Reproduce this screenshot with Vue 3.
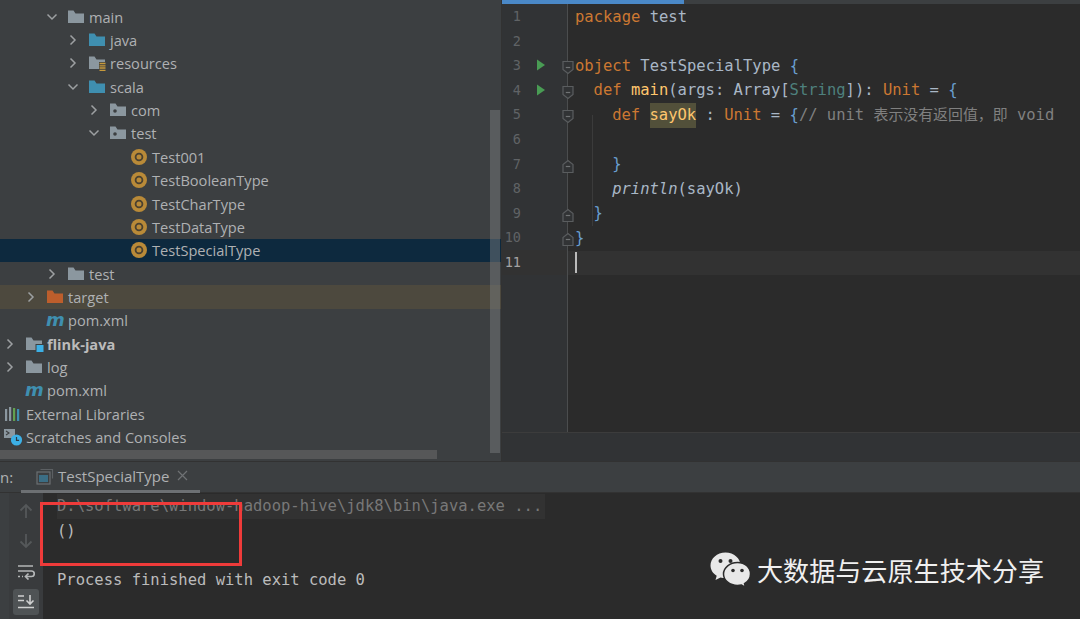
<script setup>
const tree = [
  { d: 3, open: true, icon: 'grey', t: 'main' },
  { d: 4, open: false, icon: 'blue', t: 'java' },
  { d: 4, open: false, icon: 'res', t: 'resources' },
  { d: 4, open: true, icon: 'blue', t: 'scala' },
  { d: 5, open: false, icon: 'pkg', t: 'com' },
  { d: 5, open: true, icon: 'pkg', t: 'test' },
  { d: 6, icon: 'obj', t: 'Test001' },
  { d: 6, icon: 'obj', t: 'TestBooleanType' },
  { d: 6, icon: 'obj', t: 'TestCharType' },
  { d: 6, icon: 'obj', t: 'TestDataType' },
  { d: 6, icon: 'obj', t: 'TestSpecialType', cls: 'sel' },
  { d: 3, open: false, icon: 'grey', t: 'test' },
  { d: 2, open: false, icon: 'orange', t: 'target', cls: 'excl' },
  { d: 2, icon: 'm', t: 'pom.xml' },
  { d: 1, open: false, icon: 'mod', t: 'flink-java', cls: 'bold' },
  { d: 1, open: false, icon: 'grey', t: 'log' },
  { d: 1, icon: 'm', t: 'pom.xml' },
  { d: 0, icon: 'lib', t: 'External Libraries' },
  { d: 0, icon: 'scr', t: 'Scratches and Consoles' }
]
const rowPad = (d) => ({ paddingLeft: (d === 0 ? 4 : (d - 1) * 21 + 4) + 'px' })
const folder = 'M1 3.5V15h16V5.5H8.5L6.5 2.5H1z'
const lines = [
  { n: 1 }, { n: 2 }, { n: 3, run: true, fold: 'open' }, { n: 4, run: true, fold: 'open' },
  { n: 5, fold: 'open' }, { n: 6 }, { n: 7, fold: 'close' }, { n: 8 }, { n: 9, fold: 'close' },
  { n: 10, fold: 'close' }, { n: 11, cur: true }
]
</script>

<template>
  <div class="app">
    <div class="top">
      <aside class="project">
        <div class="rows">
          <div v-for="(r, i) in tree" :key="i" class="row" :class="r.cls" :style="rowPad(r.d)">
            <span v-if="r.d > 0" class="chev">
              <svg v-if="r.open !== undefined" width="12" height="12" viewBox="0 0 12 12" fill="none" stroke="#9da0a2" stroke-width="1.5">
                <path v-if="r.open" d="M1.5 3.5 6 8l4.5-4.5" />
                <path v-else d="M3.5 1.5 8 6l-4.5 4.5" />
              </svg>
            </span>
            <svg class="ico" width="18" height="18" viewBox="0 0 18 18">
              <path v-if="r.icon === 'grey'" :d="folder" fill="#8b979f" />
              <path v-else-if="r.icon === 'blue'" :d="folder" fill="#3f8fb0" />
              <path v-else-if="r.icon === 'orange'" :d="folder" fill="#bd5e2c" />
              <template v-else-if="r.icon === 'res'">
                <path :d="folder" fill="#8b979f" />
                <rect x="11" y="8" width="7" height="9" fill="#3c3f41" />
                <path d="M11.500 9.500h6M11.500 11.800h6M11.500 14h6M11.500 16.300h6" stroke="#c79a3c" stroke-width="1.300" />
              </template>
              <template v-else-if="r.icon === 'pkg'">
                <path :d="folder" fill="#8b979f" />
                <circle cx="6" cy="10" r="1.800" fill="#3c3f41" />
              </template>
              <template v-else-if="r.icon === 'mod'">
                <path :d="folder" fill="#8b979f" />
                <rect x="10.500" y="9" width="8" height="8" fill="#3c3f41" />
                <rect x="11.500" y="10" width="7" height="7" fill="#3cb0e6" />
              </template>
              <template v-else-if="r.icon === 'obj'">
                <circle cx="9" cy="9" r="8" fill="#b98a38" />
                <circle cx="9" cy="9" r="3.400" fill="none" stroke="#4a4130" stroke-width="1.800" />
              </template>
              <template v-else-if="r.icon === 'lib'">
                <path d="M1 4h2.200v12H1z" fill="#8b979f" />
                <path d="M5 2h2.200v14H5z" fill="#8b979f" />
                <path d="M9 3h2.200v13H9z" fill="#62a04f" />
                <path d="M13 4h2.200v12H13z" fill="#3f8fb0" />
              </template>
              <template v-else-if="r.icon === 'scr'">
                <path d="M0 1h11v9H0z" fill="#8b979f" />
                <path d="M2 3l3 2-3 2" fill="none" stroke="#3c3f41" stroke-width="1.100" />
                <circle cx="12.500" cy="12" r="5.600" fill="#3cb0e6" />
                <path d="M12.500 9v3.400h2.600" fill="none" stroke="#2b3a44" stroke-width="1.200" />
              </template>
              <text v-else x="0" y="15" class="mglyph">m</text>
            </svg>
            <span class="label">{{ r.t }}</span>
          </div>
        </div>
        <div class="vbar"></div>
        <div class="hbar"></div>
      </aside>

      <main class="editor-wrap">
        <div class="tabline"><div class="tabactive"></div></div>
        <div class="editor">
          <div class="gutter">
            <div v-for="l in lines" :key="l.n" class="gl" :class="{ curg: l.cur }">
              <span class="num">{{ l.n }}</span>
              <svg v-if="l.run" class="run" width="8" height="12" viewBox="0 0 8 12"><path d="M0 0.500 8 6l-8 5.500z" fill="#499c54" /></svg>
              <svg v-if="l.fold" class="fold" width="12" height="15" viewBox="0 0 12 15" fill="#313335" stroke="#5a5d5f" stroke-width="1.200">
                <path v-if="l.fold === 'open'" d="M1 1.500h10v8L6 13.500 1 9.500z" />
                <path v-else d="M1 13.500h10v-8L6 1.500 1 5.500z" />
                <path d="M3.800 7.500h4.400" stroke="#707375" />
              </svg>
            </div>
          </div>
          <div class="code">
            <div class="cl"><span class="k">package</span> test</div>
            <div class="cl"></div>
            <div class="cl"><span class="k">object</span> <span class="ty">TestSpecialType</span> <span class="br">{</span></div>
            <div class="cl i1"><span class="k">def</span> <span class="fn">main</span>(args: <span class="ty">Array</span>[<span class="st">String</span>]): <span class="k">Unit</span> = <span class="br">{</span></div>
            <div class="cl i2"><span class="k">def</span> <span class="hl">sayOk</span> : <span class="k">Unit</span> = <span class="br">{</span><span class="cm">// unit <span class="cjk">表示没有返回值，即</span> void</span></div>
            <div class="cl"></div>
            <div class="cl i2"><span class="br">}</span></div>
            <div class="cl i2"><em>println</em>(sayOk)</div>
            <div class="cl i1"><span class="br">}</span></div>
            <div class="cl"><span class="br">}</span></div>
            <div class="cl cur"><span class="caret"></span></div>
            <div class="guide"></div>
          </div>
        </div>
        <div class="crumbs"></div>
      </main>
    </div>

    <section class="runpanel">
      <header class="runhead">
        <span class="runlabel">n:</span>
        <div class="runtab">
          <svg width="18" height="18" viewBox="0 0 18 18" fill="none">
            <path d="M4.500 2.500h12v9" stroke="#5c6063" stroke-width="1.200" />
            <rect x="1" y="5" width="13" height="12" fill="#3c3f41" stroke="#6b6f72" stroke-width="1.200" />
            <rect x="3" y="8" width="9" height="7" fill="#3b6e85" />
          </svg>
          <span class="tabtext">TestSpecialType</span>
          <svg class="x" width="11" height="11" viewBox="0 0 11 11" stroke="#6f7274" stroke-width="1.200"><path d="M1 1l9 9M10 1l-9 9" /></svg>
        </div>
      </header>
      <div class="runbody">
        <div class="tools">
          <svg class="t1" width="14" height="16" viewBox="0 0 14 16" fill="none" stroke="#55585a" stroke-width="1.800"><path d="M7 15V2M1.500 7.500 7 2l5.500 5.500" /></svg>
          <svg class="t2" width="14" height="16" viewBox="0 0 14 16" fill="none" stroke="#55585a" stroke-width="1.800"><path d="M7 1v13M1.500 8.500 7 14l5.500-5.500" /></svg>
          <svg class="t3" width="18" height="16" viewBox="0 0 18 16" fill="none" stroke="#b4b6b7" stroke-width="1.700">
            <path d="M1 2h15M1 7h13.500a2.200 2.200 0 0 1 0 5.500H9" />
            <path d="M11.500 9.500 8.500 12.500l3 3" />
            <path d="M1 12.500h5" stroke-dasharray="2 2" />
          </svg>
          <div class="t4">
            <svg width="18" height="16" viewBox="0 0 18 16" fill="none" stroke="#cfd0d0" stroke-width="1.600">
              <path d="M1 2h6M1 6.500h6M1 13.500h16" />
              <path d="M13 1v8.500M9.500 6.500 13 10l3.500-3.500" />
            </svg>
          </div>
        </div>
        <div class="console">
          <div class="cout dim"><span class="first">D:\software\window-hadoop-hive\jdk8\bin\java.exe ...</span></div>
          <div class="cout">()</div>
          <div class="cout"></div>
          <div class="cout">Process finished with exit code 0</div>
        </div>
      </div>
      <div class="redbox"></div>
      <div class="mark">
        <svg width="41" height="36" viewBox="0 0 41 36">
          <path d="M15.500 0.500C7 0.500 0.500 6.500 0.500 13.500c0 4.300 2.500 8 6.200 10.300L5.500 28l5-2.600c1.600.4 3.300.6 5 .6 8.500 0 15-5.600 15-12.500S24 .5 15.500.5z" fill="#e8e8e8" />
          <path d="M27.500 10.500C20 10.500 13.500 15.500 13.500 22s6.500 11.500 14 11.500c1.400 0 2.700-.2 4-.5l4 2.500-1-3.800c3.500-2.100 6-5.500 6-9.700 0-6.500-5.500-11.500-13-11.500z" fill="#e8e8e8" stroke="#2b2b2b" stroke-width="1.500" />
          <circle cx="10.500" cy="9" r="2" fill="#2b2b2b" /><circle cx="20.500" cy="9" r="2" fill="#2b2b2b" />
          <circle cx="23" cy="18.500" r="1.800" fill="#2b2b2b" /><circle cx="32" cy="18.500" r="1.800" fill="#2b2b2b" />
        </svg>
        <span class="marktext">大数据与云原生技术分享</span>
      </div>
    </section>
  </div>
</template>

<style scoped>
.app { width: 1080px; height: 619px; overflow: hidden; display: flex; flex-direction: column; background: #2b2b2b; font-family: "Open Sans", "Noto Sans", sans-serif; }
.top { height: 461px; display: flex; flex: none; }
.project { position: relative; width: 501px; flex: none; background: #3c3f41; padding-top: 5px; box-sizing: border-box; }
.rows { display: flex; flex-direction: column; }
.row { height: 23.36px; display: flex; align-items: center; color: #afb1b3; font-size: 14.6px; white-space: nowrap; box-sizing: border-box; }
.row.sel { background: #0d293e; }
.row.excl { background: #4d493e; }
.row.bold .label { font-weight: 700; color: #bbbbbb; }
.chev { width: 21px; flex: none; display: flex; justify-content: flex-start; box-sizing: border-box; }
.ico { flex: none; overflow: visible; }
.label { margin-left: 4px; }
.mglyph { font-family: "DejaVu Sans", sans-serif; font-size: 18px; font-style: italic; font-weight: 700; fill: #3f8fb0; }
.vbar { position: absolute; left: 490px; top: 110px; width: 10px; height: 343px; background: rgba(125, 128, 130, 0.45); }
.hbar { position: absolute; left: 0; top: 450px; width: 437px; height: 9px; background: #565758; }

.editor-wrap { flex: 1; display: flex; flex-direction: column; border-left: 1px solid #323232; min-width: 0; }
.tabline { height: 4px; background: #3c3f41; flex: none; }
.tabactive { width: 182px; height: 4px; background: #4a88c7; }
.editor { flex: 1; display: flex; min-height: 0; background: #2b2b2b; }
.gutter { width: 66px; box-sizing: border-box; flex: none; background: #313335; border-right: 1px solid #4b4d4e; position: relative; z-index: 1; }
.gl { height: 24.6px; position: relative; color: #606366; font: 13.5px "DejaVu Sans Mono", monospace; line-height: 24.6px; }
.gl.curg { color: #a4a3a3; background: #323232; }
.num { position: absolute; right: 46px; }
.run { position: absolute; left: 35px; top: 6px; }
.fold { position: absolute; left: 60px; top: 7px; }
.code { flex: 1; padding-top: 0.6px; position: relative; font: 15.5px "DejaVu Sans Mono", "Noto Sans CJK SC", monospace; color: #a9b7c6; }
.cl { height: 24.6px; line-height: 24.6px; white-space: pre; padding-left: 7px; }
.cl.i1 { padding-left: 25.6px; }
.cl.i2 { padding-left: 44.2px; }
.cl.cur { background: #323232; }
.k { color: #cc7832; }
.ty { color: #a9b7c6; }
.st { color: #4e807d; }
.fn { color: #ffc66d; }
.br { color: #6a9fd0; }
.cm { color: #808080; }
.cjk { font-size: 14.9px; }
.hl { background: #52503a; color: #ffc66d; display: inline-block; height: 24.6px; line-height: 24.6px; }
em { font-style: italic; }
.caret { display: inline-block; width: 2px; height: 21px; background: #bbbbbb; vertical-align: -5px; }
.guide { position: absolute; left: 24px; top: 111px; width: 1px; height: 111px; background: #3b3b3b; }
.crumbs { height: 28px; flex: none; background: #313335; border-top: 1px solid #3c3c3c; }

.runpanel { flex: 1; display: flex; flex-direction: column; position: relative; border-top: 1px solid #323232; min-height: 0; }
.runhead { height: 31px; flex: none; background: #3c3f41; border-bottom: 1px solid #323232; display: flex; align-items: center; box-sizing: border-box; color: #afb1b3; font-size: 15px; }
.runlabel { width: 21px; flex: none; }
.runtab { height: 31px; box-sizing: border-box; width: 179px; display: flex; align-items: center; padding-left: 15px; border-bottom: 3px solid #6d7073; }
.tabtext { margin-left: 4px; }
.x { margin-left: 8px; }
.runbody { flex: 1; display: flex; min-height: 0; }
.tools { width: 43px; flex: none; box-sizing: border-box; border-left: 9px solid #3c3f41; display: flex; flex-direction: column; align-items: center; background: #393b3d; padding-top: 10px; }
.t2 { margin-top: 14px; }
.t3 { margin-top: 15px; }
.t4 { width: 26px; height: 26px; margin-top: 9px; background: #4f5355; border-radius: 3px; display: flex; align-items: center; justify-content: center; }
.console { flex: 1; padding: 1px 0 0 14px; font: 15.5px "DejaVu Sans Mono", monospace; color: #bbbbbb; }
.cout { height: 24.6px; line-height: 24.6px; white-space: pre; }
.first { background: #323232; color: #787878; display: inline-block; height: 24.6px; line-height: 24.6px; padding-right: 3px; }
.redbox { position: absolute; left: 40px; top: 40px; width: 202px; height: 64px; border: 3px solid #ef3b3a; box-sizing: border-box; }
.mark { position: absolute; left: 710px; top: 89px; display: flex; align-items: center; }
.marktext { margin-left: 6px; font: 26.1px "Noto Sans CJK SC", sans-serif; color: #f0f0f0; white-space: nowrap; }
</style>
